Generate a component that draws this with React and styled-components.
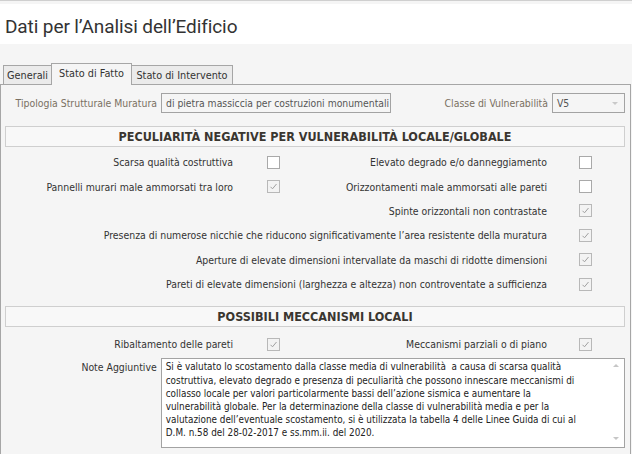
import React from "react";
import styled, { createGlobalStyle } from "styled-components";

const GlobalStyle = createGlobalStyle`
  html, body {
    margin: 0;
    padding: 0;
    background: #f5f5f5;
    overflow: hidden;
  }
  body {
    font-family: "DejaVu Sans Condensed", "DejaVu Sans", "Liberation Sans", sans-serif;
    font-stretch: condensed;
    font-size: 10.4px;
    color: #333;
  }
`;

const Page = styled.div`
  width: 632px;
  height: 454px;
  border-top: 1px solid #cfcfcf;
  box-sizing: border-box;
  background: #f5f5f5;
`;

const Header = styled.div`
  margin-top: 3px;
  height: 40px;
  background: #fff;
  display: flex;
  align-items: center;
  padding: 4px 0 0 5px;
  box-sizing: border-box;
`;

const Title = styled.h1`
  margin: 0;
  font-family: Roboto, "Open Sans", sans-serif;
  font-stretch: normal;
  font-weight: 400;
  font-size: 19px;
  letter-spacing: -0.1px;
  color: #333;
`;

const TabBar = styled.div`
  display: flex;
  align-items: flex-end;
  margin: 19px 0 -1px 3px;
  height: 22px;
  position: relative;
  z-index: 1;
`;

const Tab = styled.div`
  width: ${(p) => p.$w}px;
  height: ${(p) => (p.$active ? 22 : 20)}px;
  box-sizing: border-box;
  border: 1px solid #a6a6a6;
  border-bottom: ${(p) => (p.$active ? "none" : "1px solid #a6a6a6")};
  margin-left: ${(p) => (p.$first ? 0 : -1)}px;
  background: ${(p) => (p.$active ? "#f5f5f5" : "#ebebeb")};
  display: flex;
  align-items: center;
  justify-content: center;
  padding-bottom: ${(p) => (p.$active ? 2 : 0)}px;
  font-size: 10.8px;
  color: #333;
  position: relative;
  z-index: ${(p) => (p.$active ? 2 : 1)};
`;

const Panel = styled.div`
  width: 631px;
  height: 380px;
  box-sizing: border-box;
  border: 1px solid #a6a6a6;
  padding: 0 5px 0 4px;
  background: #f5f5f5;
`;

const FieldRow = styled.div`
  display: flex;
  align-items: center;
  margin-top: 8px;
  height: 20px;
`;

const FieldLabel = styled.div`
  width: ${(p) => (p.$w ? `${p.$w}px` : "auto")};
  flex: ${(p) => (p.$w ? "none" : 1)};
  text-align: right;
  margin-right: 4px;
  color: ${(p) => (p.$muted ? "#7a7062" : "#333")};
  white-space: nowrap;
`;

const Input = styled.div`
  width: ${(p) => p.$w}px;
  height: 20px;
  box-sizing: border-box;
  border: 1px solid #a3a3a3;
  background: #f5f5f5;
  color: #555;
  font-size: 10.3px;
  display: flex;
  align-items: center;
  justify-content: space-between;
  padding: 0 6px 0 4px;
  white-space: nowrap;
  overflow: hidden;
`;

const Caret = styled.span`
  width: 0;
  height: 0;
  border-left: 3.5px solid transparent;
  border-right: 3.5px solid transparent;
  border-top: 3px solid #c9c9c9;
`;

const SectionTitle = styled.div`
  margin-top: ${(p) => p.$mt}px;
  height: 21px;
  box-sizing: border-box;
  border: 1px solid #cfcfcf;
  background: #f8f8f8;
  display: flex;
  align-items: center;
  justify-content: center;
  font-weight: bold;
  font-size: 12.5px;
  color: #3a3630;
`;

const CheckGrid = styled.div`
  margin-top: ${(p) => p.$mt}px;
  display: grid;
  grid-template-columns: 228px 34px 13px 267px 32px 13px;
  grid-auto-rows: ${(p) => p.$rh}px;
  align-items: center;
`;

const CheckLabel = styled.div`
  grid-column: ${(p) => (p.$wide ? "1 / 5" : p.$col)};
  text-align: right;
  white-space: nowrap;
  color: #333;
`;

const Box = styled.span`
  grid-column: ${(p) => p.$col};
  width: 13px;
  height: 13px;
  box-sizing: border-box;
  border: 1px solid ${(p) => (p.$checked ? "#b8b8b8" : "#a9a9a9")};
  background: ${(p) => (p.$checked ? "#f3f3f3" : "#fff")};
  display: flex;
  align-items: center;
  justify-content: center;
`;

const NoteRow = styled.div`
  display: flex;
  align-items: flex-start;
  margin-top: 2px;
`;

const NoteLabel = styled.div`
  width: 152px;
  text-align: right;
  margin-right: 4px;
  padding-top: 3px;
  color: #333;
`;

const TextArea = styled.div`
  width: 465px;
  height: 90px;
  box-sizing: border-box;
  border: 1px solid #a3a3a3;
  background: #fff;
  display: flex;
`;

const TextBody = styled.div`
  flex: 1;
  padding: 1px 0 0 4px;
  line-height: 13.2px;
  font-size: 9.85px;
  color: #222;
  white-space: pre;
`;

const ScrollBar = styled.div`
  width: 17px;
  display: flex;
  flex-direction: column;
  justify-content: space-between;
  align-items: center;
  padding: 5px 0 7px;
`;

const Arrow = styled.span`
  width: 0;
  height: 0;
  border-left: 3.5px solid transparent;
  border-right: 3.5px solid transparent;
  ${(p) =>
    p.$up
      ? "border-bottom: 3.5px solid #c6c6c6;"
      : "border-top: 3.5px solid #c6c6c6;"}
`;

const Check = ({ checked, col }) => (
  <Box $checked={checked} $col={col}>
    {checked && (
      <svg width="9" height="9" viewBox="0 0 9 9">
        <polyline
          points="1.5,4.8 3.5,6.8 7.5,2"
          fill="none"
          stroke="#a0a0a0"
          strokeWidth="1"
        />
      </svg>
    )}
  </Box>
);

const noteText = [
  "Si è valutato lo scostamento dalla classe media di vulnerabilità  a causa di scarsa qualità",
  "costruttiva, elevato degrado e presenza di peculiarità che possono innescare meccanismi di",
  "collasso locale per valori particolarmente bassi dell’azione sismica e aumentare la",
  "vulnerabilità globale. Per la determinazione della classe di vulnerabilità media e per la",
  "valutazione dell’eventuale scostamento, si è utilizzata la tabella 4 delle Linee Guida di cui al",
  "D.M. n.58 del 28-02-2017 e ss.mm.ii. del 2020.",
].join("\n");

const App = () => {
  return (
    <Page>
      <GlobalStyle />
      <Header>
        <Title>Dati per l’Analisi dell’Edificio</Title>
      </Header>

      <TabBar>
        <Tab $w={49} $first>
          Generali
        </Tab>
        <Tab $w={81} $active>
          Stato di Fatto
        </Tab>
        <Tab $w={102}>Stato di Intervento</Tab>
      </TabBar>

      <Panel>
        <FieldRow>
          <FieldLabel $w={152} $muted>
            Tipologia Strutturale Muratura
          </FieldLabel>
          <Input $w={230}>di pietra massiccia per costruzioni monumentali</Input>
          <FieldLabel $muted>Classe di Vulnerabilità</FieldLabel>
          <Input $w={73}>
            V5
            <Caret />
          </Input>
        </FieldRow>

        <SectionTitle $mt={13}>
          PECULIARITÀ NEGATIVE PER VULNERABILITÀ LOCALE/GLOBALE
        </SectionTitle>

        <CheckGrid $mt={3} $rh={24.4}>
          <CheckLabel $col={1}>Scarsa qualità costruttiva</CheckLabel>
          <Check col={3} />
          <CheckLabel $col={4}>Elevato degrado e/o danneggiamento</CheckLabel>
          <Check col={6} />

          <CheckLabel $col={1}>Pannelli murari male ammorsati tra loro</CheckLabel>
          <Check col={3} checked />
          <CheckLabel $col={4}>Orizzontamenti male ammorsati alle pareti</CheckLabel>
          <Check col={6} />

          <CheckLabel $wide>Spinte orizzontali non contrastate</CheckLabel>
          <Check col={6} checked />

          <CheckLabel $wide>
            Presenza di numerose nicchie che riducono significativamente l’area
            resistente della muratura
          </CheckLabel>
          <Check col={6} checked />

          <CheckLabel $wide>
            Aperture di elevate dimensioni intervallate da maschi di ridotte
            dimensioni
          </CheckLabel>
          <Check col={6} checked />

          <CheckLabel $wide>
            Pareti di elevate dimensioni (larghezza e altezza) non controventate
            a sufficienza
          </CheckLabel>
          <Check col={6} checked />
        </CheckGrid>

        <SectionTitle $mt={10}>POSSIBILI MECCANISMI LOCALI</SectionTitle>

        <CheckGrid $mt={5} $rh={24}>
          <CheckLabel $col={1}>Ribaltamento delle pareti</CheckLabel>
          <Check col={3} checked />
          <CheckLabel $col={4}>Meccanismi parziali o di piano</CheckLabel>
          <Check col={6} checked />
        </CheckGrid>

        <NoteRow>
          <NoteLabel>Note Aggiuntive</NoteLabel>
          <TextArea>
            <TextBody>{noteText}</TextBody>
            <ScrollBar>
              <Arrow $up />
              <Arrow />
            </ScrollBar>
          </TextArea>
        </NoteRow>
      </Panel>
    </Page>
  );
};

export default App;
